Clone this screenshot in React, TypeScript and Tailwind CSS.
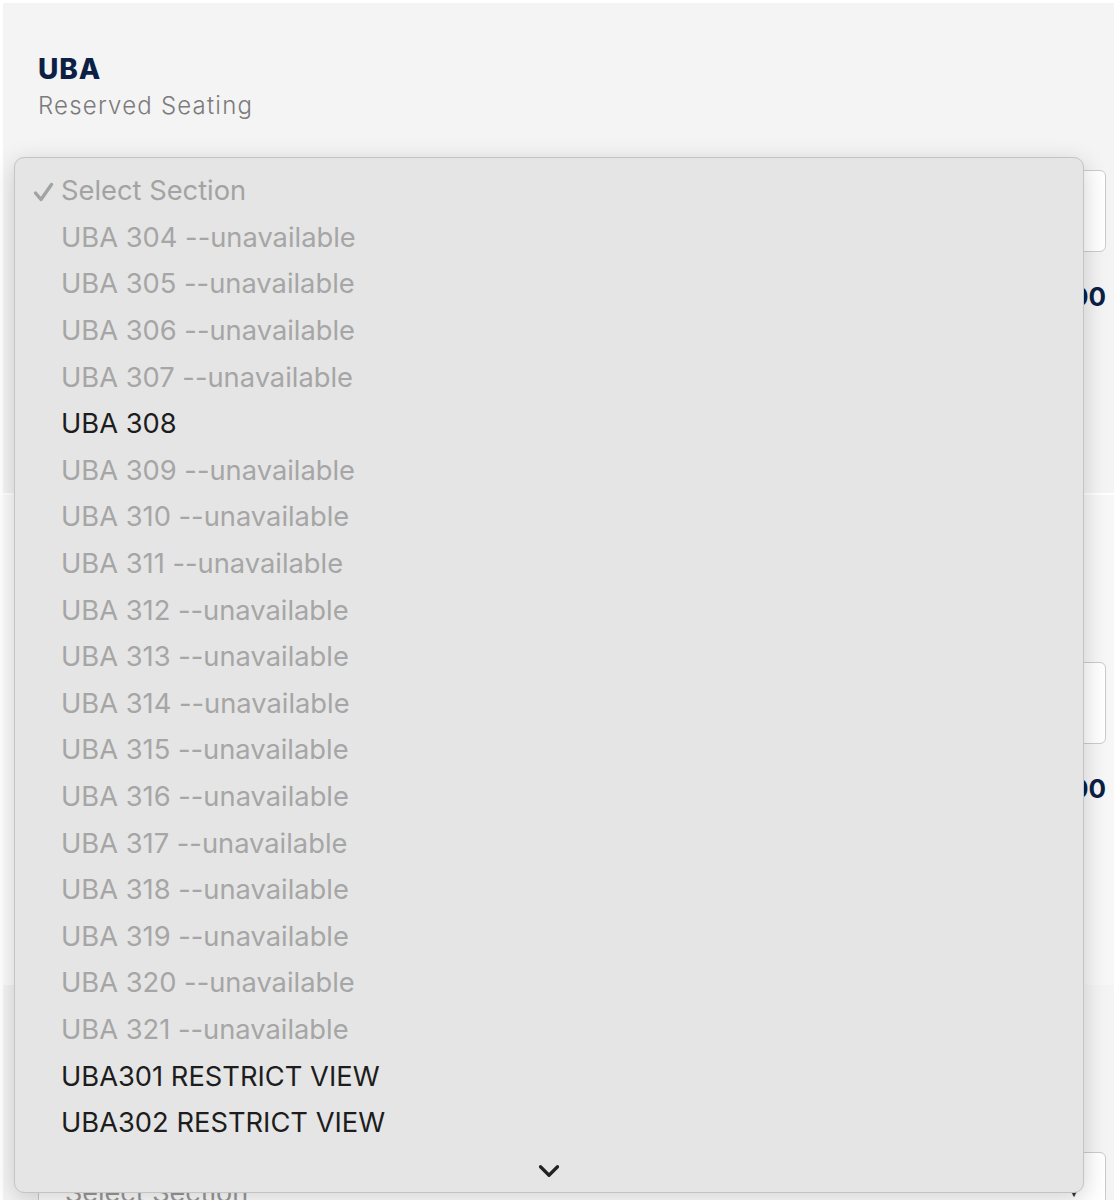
import { ChevronDown } from "lucide-react";

const sections = [
  { label: "UBA 304 --unavailable", disabled: true },
  { label: "UBA 305 --unavailable", disabled: true },
  { label: "UBA 306 --unavailable", disabled: true },
  { label: "UBA 307 --unavailable", disabled: true },
  { label: "UBA 308", disabled: false },
  { label: "UBA 309 --unavailable", disabled: true },
  { label: "UBA 310 --unavailable", disabled: true },
  { label: "UBA 311 --unavailable", disabled: true },
  { label: "UBA 312 --unavailable", disabled: true },
  { label: "UBA 313 --unavailable", disabled: true },
  { label: "UBA 314 --unavailable", disabled: true },
  { label: "UBA 315 --unavailable", disabled: true },
  { label: "UBA 316 --unavailable", disabled: true },
  { label: "UBA 317 --unavailable", disabled: true },
  { label: "UBA 318 --unavailable", disabled: true },
  { label: "UBA 319 --unavailable", disabled: true },
  { label: "UBA 320 --unavailable", disabled: true },
  { label: "UBA 321 --unavailable", disabled: true },
  { label: "UBA301 RESTRICT VIEW", disabled: false },
  { label: "UBA302 RESTRICT VIEW", disabled: false },
];

function TicketCard({ tone }: { tone: "gray" | "white" }) {
  return (
    <div
      className={`h-[490px] shrink-0 pt-[49px] pl-[35px] pr-[8px] ${
        tone === "gray" ? "bg-[#f4f4f4]" : "bg-gradient-to-r from-[#fbfbfb] to-[#f7f7f7]"
      }`}
    >
      <h2 className="text-[28px] leading-[34px] font-extrabold tracking-[0.03em] text-[#0c1f45] font-['Inter',sans-serif]">
        UBA
      </h2>
      <p className="mt-[2px] text-[24px] leading-[36px] text-[#7b7b7b] font-['Inter',sans-serif] font-light tracking-[0.05em]">
        Reserved Seating
      </p>
      <div className="mt-[46px] h-[82px] rounded-[6px] border border-[#cbcbcb] bg-white flex items-center px-[26px] justify-between">
        <span className="text-[27px] text-[#9a9a9a] font-['Inter',sans-serif]">Select Section</span>
        <span className="text-[10px] text-[#333]">▼</span>
      </div>
      <div className="mt-[25px] text-right text-[26px] font-bold text-[#0c1f45] font-['Inter',sans-serif]">
        $45.00
      </div>
    </div>
  );
}

export default function App() {
  return (
    <div className="relative w-[1114px] h-[1200px] overflow-hidden bg-white">
      <div className="flex flex-col pt-[3px] pl-[3px]">
        <TicketCard tone="gray" />
        <div className="h-[2px] bg-white" />
        <TicketCard tone="white" />
        <TicketCard tone="gray" />
      </div>

      {/* native select popup */}
      <div className="absolute left-[14px] top-[157px] w-[1070px] h-[1036px] rounded-[10px] border border-[#c4c4c4] bg-[#e5e5e5] shadow-[0_6px_24px_rgba(0,0,0,0.18)] pt-[10px] font-['Inter',sans-serif]">
        <div className="h-[47px] flex items-center text-[27.3px] text-[#a3a3a3]">
          <span className="w-[46px] flex justify-end pr-[7px]">
            <svg width="21" height="20" viewBox="0 0 21 20" fill="none" stroke="currentColor" strokeWidth="3.4" strokeLinecap="round" strokeLinejoin="round">
              <path d="M2.5 11 L8 17.5 L18.5 2.5" />
            </svg>
          </span>
          <span>Select Section</span>
        </div>
        {sections.map((s) => (
          <div
            key={s.label}
            className={`h-[46.6px] flex items-center pl-[46px] text-[27.3px] ${
              s.disabled ? "text-[#a6a6a6]" : "text-[#1d1d1d]"
            }`}
          >
            {s.label}
          </div>
        ))}
        <div className="absolute bottom-[4px] left-0 right-0 flex justify-center text-[#222]">
          <ChevronDown size={34} strokeWidth={2.3} />
        </div>
      </div>
    </div>
  );
}
